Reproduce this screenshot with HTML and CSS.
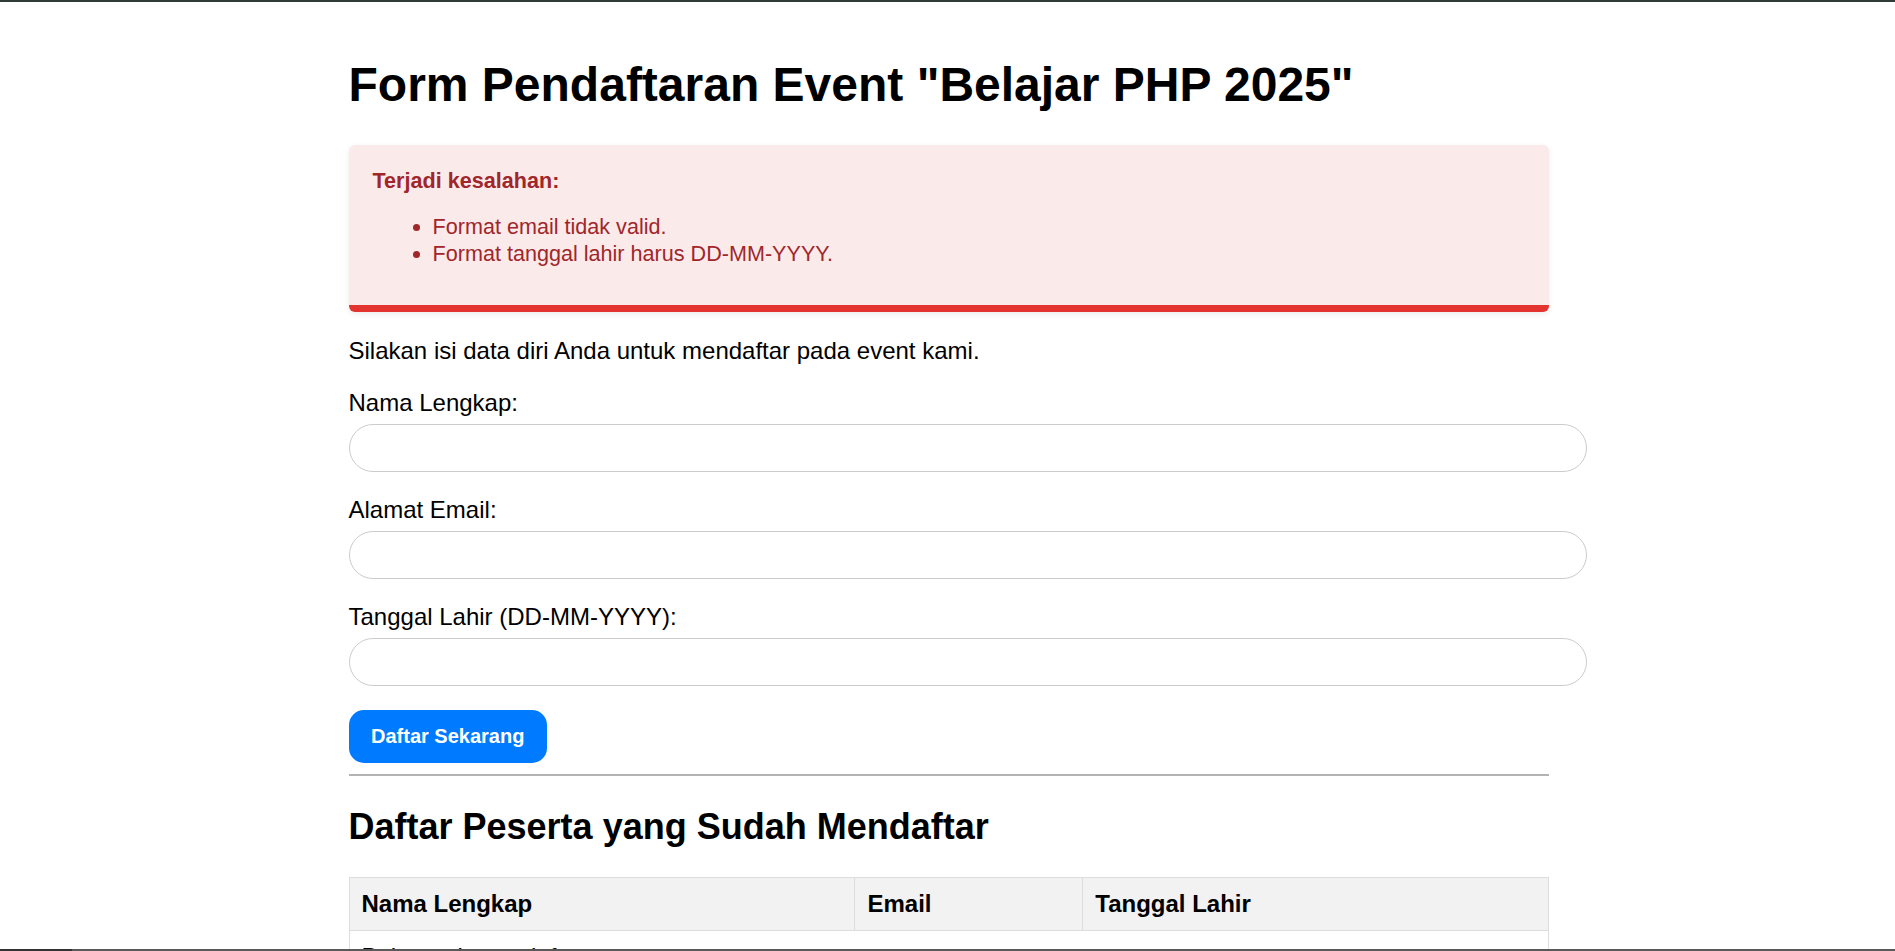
FILE: index.html
```html
<!DOCTYPE html>
<html lang="id">
<head>
<meta charset="utf-8">
<title>Form Pendaftaran Event</title>
<link rel="stylesheet" href="styles.css">
</head>
<body>
<div class="topbar"></div>
<div class="container">
  <h1 class="title">Form Pendaftaran Event "Belajar PHP 2025"</h1>

  <div class="alert">
    <p class="alert-title">Terjadi kesalahan:</p>
    <ul class="alert-list">
      <li>Format email tidak valid.</li>
      <li>Format tanggal lahir harus DD-MM-YYYY.</li>
    </ul>
  </div>

  <p class="intro">Silakan isi data diri Anda untuk mendaftar pada event kami.</p>

  <form class="form">
    <div class="field">
      <label class="label" for="nama">Nama Lengkap:</label>
      <input class="input" type="text" id="nama">
    </div>
    <div class="field">
      <label class="label" for="email">Alamat Email:</label>
      <input class="input" type="text" id="email">
    </div>
    <div class="field">
      <label class="label" for="tgl">Tanggal Lahir (DD-MM-YYYY):</label>
      <input class="input" type="text" id="tgl">
    </div>
    <button class="btn" type="button">Daftar Sekarang</button>
  </form>

  <hr class="divider">

  <h2 class="subtitle">Daftar Peserta yang Sudah Mendaftar</h2>

  <table class="table">
    <thead>
      <tr>
        <th class="col-nama">Nama Lengkap</th>
        <th class="col-email">Email</th>
        <th>Tanggal Lahir</th>
      </tr>
    </thead>
    <tbody>
      <tr>
        <td colspan="3">Belum ada pendaftar.</td>
      </tr>
    </tbody>
  </table>
</div>
<div class="bottombar"><span class="bottombar-thumb"></span></div>
</body>
</html>
```

FILE: styles.css
```css
html {
  overflow: hidden;
}

body {
  margin: 0;
  font-family: "Liberation Sans", Arial, sans-serif;
  font-size: 24px;
  color: #000;
  background: #fff;
}

.topbar {
  position: fixed;
  top: 0;
  left: 0;
  right: 0;
  height: 2px;
  background: #2f3b37;
}

.bottombar {
  position: fixed;
  left: 0;
  right: 0;
  bottom: 0;
  height: 2px;
  background: #5a5a5a;
  display: flex;
}

.bottombar-thumb {
  width: 72px;
  background: #333;
}

.container {
  box-sizing: border-box;
  max-width: 1202px;
  margin: 0 auto;
  padding: 29px 0 0 2px;
}

.title {
  font-size: 48px;
  font-weight: bold;
  margin: 28px 0 33px;
  line-height: 1.15;
}

.alert {
  background: #fbeaea;
  color: #a0262a;
  border-bottom: 7px solid #e3342f;
  border-radius: 6px;
  box-shadow: 0 2px 6px rgba(0, 0, 0, 0.08);
  padding: 24px 24px 16px;
  margin-bottom: 25px;
}

.alert-title {
  margin: 0;
  font-size: 21.6px;
  font-weight: bold;
  line-height: 24.8px;
}

.alert-list {
  margin: 20px 0 21.5px;
  padding-left: 60px;
  font-size: 21.6px;
  line-height: 26.6px;
}

.intro {
  margin: 0 0 24px;
}

.form {
  margin: 0;
}

.field {
  margin-bottom: 24px;
}

.label {
  display: block;
  margin-bottom: 7px;
}

.input {
  display: block;
  width: 100%;
  height: 46px;
  padding: 0 18px;
  border: 1px solid #cccccc;
  border-radius: 24px;
  font-family: inherit;
  font-size: 24px;
  background: #fff;
  outline: none;
}

.btn {
  display: block;
  margin: 0;
  padding: 15px 22.5px;
  background: #007bff;
  color: #fff;
  border: none;
  border-radius: 15px;
  font-family: "Liberation Sans", Arial, sans-serif;
  font-size: 20px;
  font-weight: bold;
  line-height: 23px;
  cursor: pointer;
}

.divider {
  margin: 11px 0 12px;
  border: none;
  border-top: 2px solid #b3b3b3;
}

.subtitle {
  font-size: 36px;
  font-weight: bold;
  margin: 30px 0 30px;
  line-height: 1.15;
}

.table {
  width: 100%;
  border-collapse: collapse;
}

.table th,
.table td {
  border: 1.5px solid #dddddd;
  padding: 12px;
  text-align: left;
  font-size: 24px;
  line-height: 27.6px;
}

.table th {
  background: #f2f2f2;
  font-weight: bold;
}

.col-nama {
  width: 42.2%;
}

.col-email {
  width: 19%;
}
```
